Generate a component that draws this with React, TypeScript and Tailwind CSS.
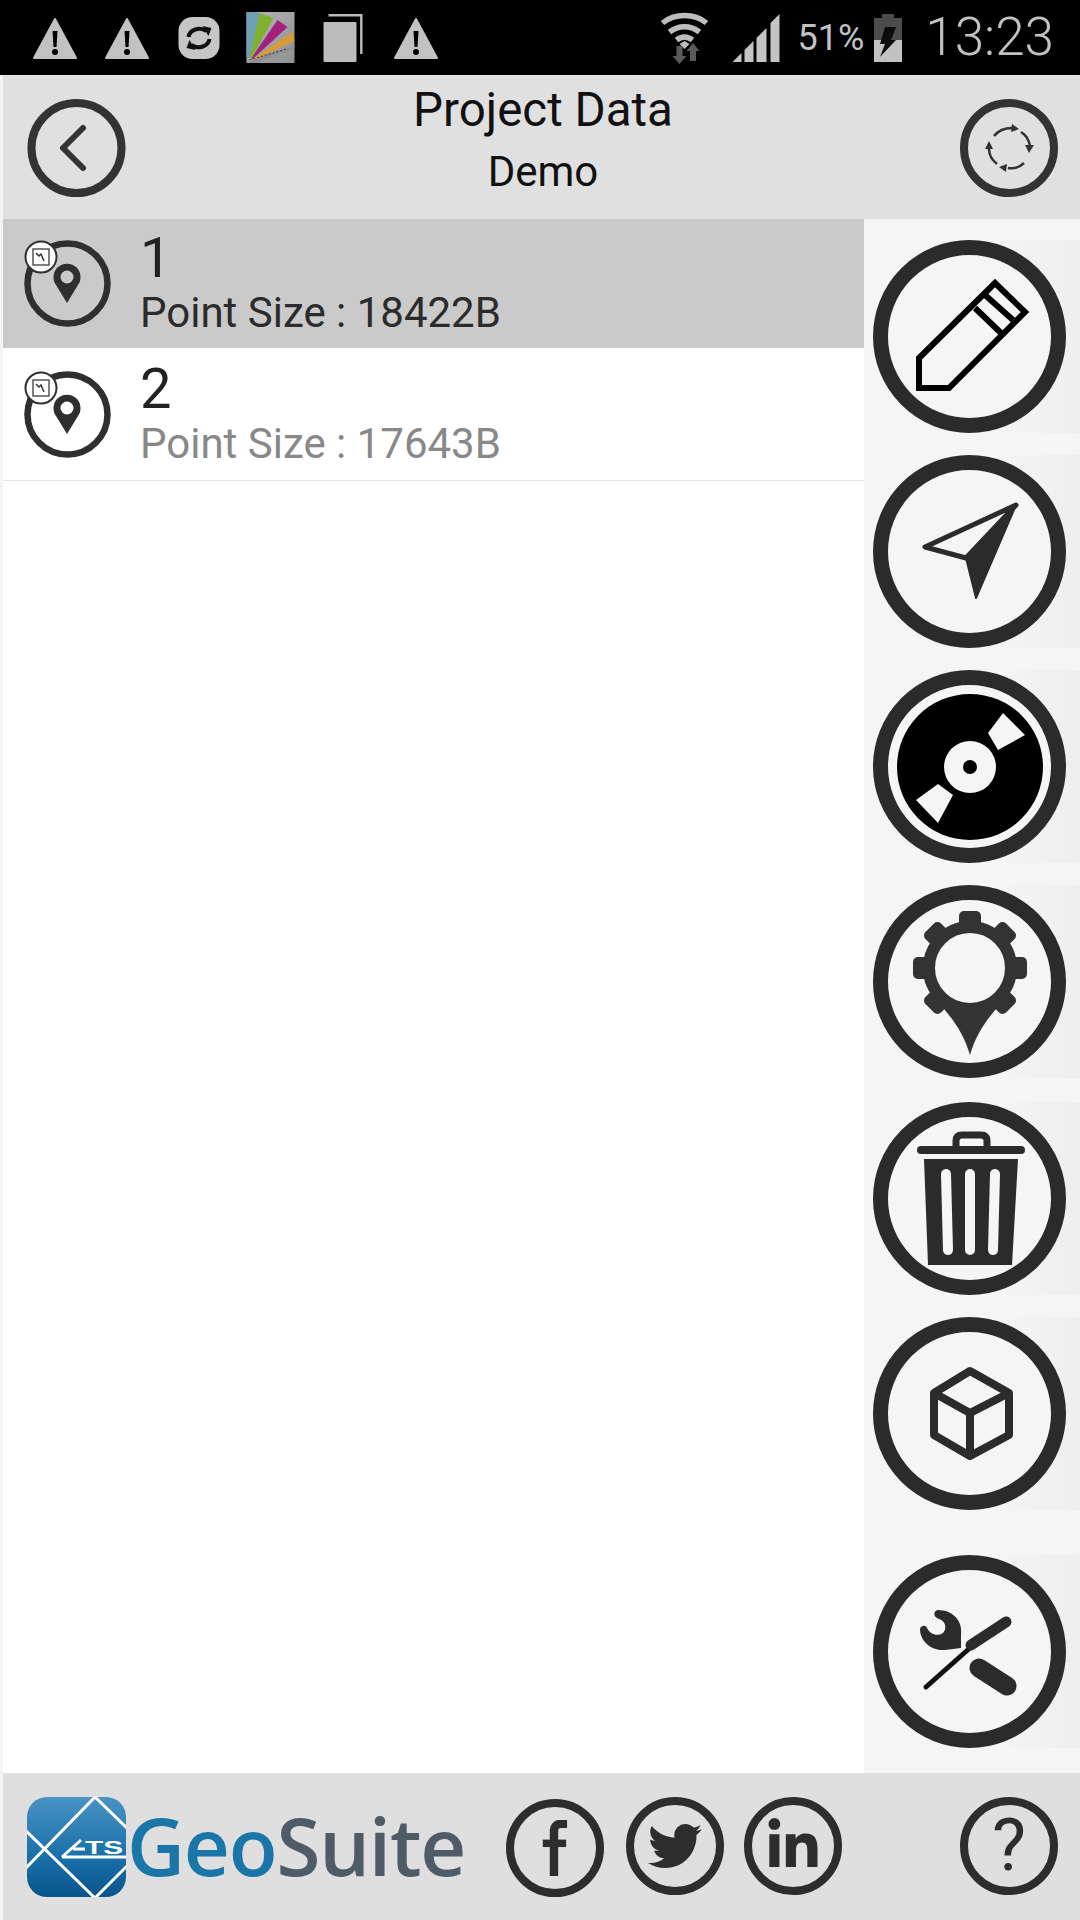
import { FaLinkedinIn, FaTwitter } from 'react-icons/fa';

function Warning({ className = '' }: { className?: string }) {
  return (
    <svg width="46" height="43" viewBox="0 0 45 43" className={`shrink-0 ${className}`}>
      <polygon points="22.5,2 43.5,41 1.5,41" fill="#c2c2c2" stroke="#c2c2c2" strokeWidth="2" strokeLinejoin="round" />
      <polygon points="20,14 25,14 24,30 21,30" fill="#000" />
      <circle cx="22.5" cy="35" r="3" fill="#000" />
    </svg>
  );
}

function SyncBadge() {
  return (
    <svg width="42" height="42" viewBox="0 0 41 42" className="ml-[28px] shrink-0">
      <rect width="41" height="42" rx="14" fill="#c6c6c6" />
      <path d="M10 20C11 13 21 9 28 14" fill="none" stroke="#111" strokeWidth="4" />
      <polygon points="24,9 33,11 30,19" fill="#111" />
      <path d="M31 22C30 29 20 33 13 28" fill="none" stroke="#111" strokeWidth="4" />
      <polygon points="17,33 8,31 11,23" fill="#111" />
    </svg>
  );
}

function AppThumb() {
  return (
    <svg width="49" height="51" viewBox="0 0 48 51" className="ml-[26px] shrink-0">
      <defs>
        <linearGradient id="thumb" x1="0" y1="0" x2="1" y2="1">
          <stop offset="0" stopColor="#b4b6b8" />
          <stop offset="1" stopColor="#8f9092" />
        </linearGradient>
      </defs>
      <rect width="48" height="51" fill="url(#thumb)" />
      <polygon points="0,0 11,0 13,2 3,46 0,46" fill="#6f9fb5" />
      <polygon points="13,1 27,6 5,46 3,46" fill="#7fb02f" />
      <polygon points="31,8 41,15 6,47 5,46" fill="#a51f7c" />
      <polygon points="46,20 48,29 7,48 6,47" fill="#d99a3a" />
      <polygon points="7,48 48,33 48,36 10,51 2,51" fill="#8d8f93" />
      <path d="M3 48L40 37" stroke="#333" strokeWidth="1" strokeDasharray="2 2" />
    </svg>
  );
}

function CopyIcon() {
  return (
    <svg width="40" height="48" viewBox="0 0 39 48" className="ml-[28px] shrink-0">
      <rect y="8" width="33" height="40" rx="1" fill="#bcbcbc" />
      <path d="M5 1.2H37.8V40" fill="none" stroke="#bcbcbc" strokeWidth="2.4" />
    </svg>
  );
}

function Wifi() {
  return (
    <svg width="52" height="52" viewBox="0 0 49 52" className="shrink-0">
      <g fill="none" stroke="#bdbdbd" strokeWidth="5.5">
        <path d="M2 11C14 1 34 1 46 11" />
        <path d="M9 20C18 13 30 13 39 20" />
        <path d="M16 28C21 24 27 24 32 28" />
      </g>
      <polygon points="24,37 19,32 24,29 29,32" fill="#bdbdbd" />
      <polygon points="16,34 22,34 22,44 26,44 19,52 12,44 16,44" fill="#5a5a5a" />
      <polygon points="32.5,31 39,39 35.5,39 35.5,49 29.5,49 29.5,39 26,39" fill="#5a5a5a" />
    </svg>
  );
}

function Signal() {
  return (
    <svg width="48" height="48" viewBox="0 0 47 48" className="ml-[21px] shrink-0">
      <g fill="#c4c4c4">
        <polygon points="0,48 9,39 9,48" />
        <polygon points="12,36 21,27 21,48 12,48" />
        <polygon points="24,24 34,14 34,48 24,48" />
        <polygon points="38,9 47,0 47,48 38,48" />
      </g>
    </svg>
  );
}

function Battery() {
  return (
    <svg width="30" height="48" viewBox="0 0 28 48" className="ml-[9px] shrink-0">
      <rect x="8" width="12" height="5" fill="#4c4c4c" />
      <rect y="4" width="28" height="22" fill="#4c4c4c" />
      <rect y="26" width="28" height="22" fill="#c2c2c2" />
      <polygon points="11,13 22,13 17,26 22,26 6,43 11,30 6,30" fill="#0c0c0c" />
    </svg>
  );
}

function BackButton() {
  return (
    <svg width="99" height="98" viewBox="0 0 99 98" className="shrink-0 mt-[2px]">
      <circle cx="49.5" cy="49" r="45" fill="none" stroke="#333" strokeWidth="8" />
      <path d="M56 29L36 49L56 69" fill="none" stroke="#333" strokeWidth="6" strokeLinecap="round" strokeLinejoin="round" />
    </svg>
  );
}

function ReloadButton() {
  return (
    <svg width="98" height="98" viewBox="0 0 98 98" className="shrink-0 mt-[2px]">
      <circle cx="49" cy="49" r="45" fill="none" stroke="#333" strokeWidth="8" />
      <g fill="none" stroke="#333" strokeWidth="2.5">
        <path d="M34 37C38 32 45 29 52 29" />
        <path d="M61 33C66 36 69 41 70 47" />
        <path d="M64 64C60 68 54 70 48 69" />
        <path d="M37 65C32 61 29 56 29 50" />
      </g>
      <g fill="#333">
        <polygon points="52,25 59,30 51,33" />
        <polygon points="74,46 69,54 65,46" />
        <polygon points="46,73 39,68 47,65" />
        <polygon points="25,50 29,42 33,50" />
      </g>
    </svg>
  );
}

function Ring({ children }: { children: React.ReactNode }) {
  return (
    <svg width="193" height="193" viewBox="0 0 193 193" className="block">
      <circle cx="96.5" cy="96.5" r="89" fill="#f5f5f5" stroke="#2b2b2b" strokeWidth="15" />
      {children}
    </svg>
  );
}

function SideButton({ children, className = '' }: { children: React.ReactNode; className?: string }) {
  return (
    <div className={`h-[193px] pl-[9px] bg-gradient-to-r from-[#f5f5f5] from-[60%] to-[#eeeeee] ${className}`}>
      {children}
    </div>
  );
}

function PointIcon({ hole }: { hole: string }) {
  return (
    <svg width="87" height="87" viewBox="0 0 87 87" className="shrink-0">
      <circle cx="43.5" cy="43.5" r="40" fill="none" stroke="#2f2f2f" strokeWidth="6.5" />
      <path d="M43 63L32 45A13.5 13.5 0 1 1 54 45Z" fill="#2f2f2f" />
      <circle cx="43" cy="37" r="6.5" fill={hole} />
      <circle cx="17" cy="17" r="15.5" fill="#fff" stroke="#2f2f2f" strokeWidth="2" />
      <rect x="9" y="9" width="16" height="16" fill="none" stroke="#555" strokeWidth="1.5" />
      <path d="M12 13L15 16L17 14L20 21" fill="none" stroke="#333" strokeWidth="1.5" />
    </svg>
  );
}

function ProjectRow({ num, size, selected }: { num: string; size: string; selected?: boolean }) {
  return (
    <div className={`flex items-center pl-[21px] ${selected ? 'h-[129px] bg-[#cacaca]' : 'h-[132px] mt-[1px] border-b border-[#e4e4e4]'}`}>
      <PointIcon hole={selected ? '#cacaca' : '#ffffff'} />
      <div className="ml-[29px] flex flex-col">
        <span className="text-[56px] leading-[58px] text-[#222]">{num}</span>
        <span className={`text-[42px] leading-[52px] ${selected ? 'text-[#2b2b2b]' : 'text-[#888888]'}`}>Point Size : {size}</span>
      </div>
    </div>
  );
}

function SocialRing({ className = '', children }: { className?: string; children: React.ReactNode }) {
  return (
    <div className={`w-[98px] h-[98px] rounded-full border-[8px] border-[#2d2d2d] flex items-center justify-center text-[#2d2d2d] shrink-0 ${className}`}>
      {children}
    </div>
  );
}

function Logo() {
  return (
    <svg width="99" height="100" viewBox="0 0 99 100" className="shrink-0">
      <defs>
        <linearGradient id="logoBlue" x1="0" y1="0" x2="0" y2="1">
          <stop offset="0" stopColor="#4a92c4" />
          <stop offset="0.55" stopColor="#1c73ab" />
          <stop offset="1" stopColor="#08558c" />
        </linearGradient>
        <clipPath id="logoClip">
          <rect width="99" height="100" rx="20" />
        </clipPath>
      </defs>
      <g clipPath="url(#logoClip)">
        <rect width="99" height="100" fill="url(#logoBlue)" />
        <g stroke="#fff" strokeWidth="3" fill="none">
          <path d="M-2 72L68 0L101 32" />
          <path d="M-2 33L68 101L101 68" />
        </g>
        <path d="M35 60L54 43M35 60H99M46 52H58" stroke="#fff" strokeWidth="3" fill="none" />
        <text x="58" y="57" fontFamily="'Liberation Sans', sans-serif" fontWeight="700" fontSize="18" fill="#fff" textLength="38" lengthAdjust="spacingAndGlyphs">TS</text>
      </g>
    </svg>
  );
}

export default function App() {
  return (
    <div className="w-[1080px] h-[1920px] flex flex-col bg-white font-['Roboto',sans-serif] overflow-hidden">
      {/* status bar */}
      <div className="h-[75px] bg-black flex items-center pl-[32px] pr-[26px] shrink-0">
        <Warning className="mt-[2px]" />
        <Warning className="mt-[2px] ml-[26px]" />
        <SyncBadge />
        <AppThumb />
        <CopyIcon />
        <Warning className="mt-[2px] ml-[30px]" />
        <div className="ml-auto flex items-center">
          <Wifi />
          <Signal />
          <span className="ml-[17px] text-[36px] text-[#c2c2c2] leading-none">51%</span>
          <Battery />
          <span className="ml-[22px] text-[53px] font-light text-[#c2c2c2] leading-none">13:23</span>
        </div>
      </div>

      <div className="flex-1 flex flex-col border-l-[3px] border-[#f4f4f4] min-h-0">
        {/* header */}
        <div className="h-[144px] bg-[#e0e0e0] flex items-center justify-between pl-[24px] pr-[22px] shrink-0">
          <BackButton />
          <div className="flex flex-col items-center mb-[16px]">
            <span className="text-[47.5px] leading-[66px] text-[#111]">Project Data</span>
            <span className="text-[42px] leading-[58px] text-[#111]">Demo</span>
          </div>
          <ReloadButton />
        </div>

        <div className="flex-1 flex min-h-0">
          {/* list */}
          <div className="flex-1">
            <ProjectRow num="1" size="18422B" selected />
            <ProjectRow num="2" size="17643B" />
          </div>

          {/* side buttons */}
          <div className="w-[216px] bg-[#f5f5f5] pt-[21px] flex flex-col gap-[22px] shrink-0">
            <SideButton>
              <Ring>
                <g fill="none" stroke="#000" strokeWidth="6">
                  <polygon points="46,148 46,118 122,43 152,72 76,148" />
                  <path d="M102 68L128 93M112 55L140 80" />
                </g>
              </Ring>
            </SideButton>
            <SideButton>
              <Ring>
                <polygon points="143,50 52,92 93,103" fill="#f5f5f5" stroke="#2b2b2b" strokeWidth="5" strokeLinejoin="round" />
                <polygon points="143,50 93,103 103,143" fill="#2b2b2b" stroke="#2b2b2b" strokeWidth="2" strokeLinejoin="round" />
              </Ring>
            </SideButton>
            <SideButton>
              <Ring>
                <circle cx="97" cy="97" r="73" fill="#000" />
                <circle cx="97" cy="97" r="26" fill="#f5f5f5" />
                <circle cx="97" cy="97" r="7" fill="#000" />
                <polygon points="130,43 152,65 125,80 115,63" fill="#f5f5f5" />
                <polygon points="43,130 65,153 80,125 65,114" fill="#f5f5f5" />
              </Ring>
            </SideButton>
            <SideButton>
              <Ring>
                <g fill="#333">
                  <path d="M66 118C76 130 90 145 97 170C104 145 118 130 128 118Z" />
                  <rect x="86" y="26" width="22" height="22" rx="5" />
                  <rect x="86" y="26" width="22" height="22" rx="5" transform="rotate(45 97 83)" />
                  <rect x="86" y="26" width="22" height="22" rx="5" transform="rotate(90 97 83)" />
                  <rect x="86" y="26" width="22" height="22" rx="5" transform="rotate(135 97 83)" />
                  <rect x="86" y="26" width="22" height="22" rx="5" transform="rotate(225 97 83)" />
                  <rect x="86" y="26" width="22" height="22" rx="5" transform="rotate(270 97 83)" />
                  <rect x="86" y="26" width="22" height="22" rx="5" transform="rotate(315 97 83)" />
                </g>
                <circle cx="97" cy="83" r="41" fill="#f5f5f5" stroke="#333" strokeWidth="12" />
              </Ring>
            </SideButton>
            <SideButton className="mt-[2px]">
              <Ring>
                <path d="M48 48H148" stroke="#2b2b2b" strokeWidth="8" strokeLinecap="round" />
                <path d="M83 45V39Q83 33 89 33H108Q114 33 114 39V45" fill="none" stroke="#2b2b2b" strokeWidth="7" />
                <polygon points="51,57 145,57 139,163 55,163" fill="#2b2b2b" />
                <g stroke="#f5f5f5" strokeWidth="10" strokeLinecap="round">
                  <path d="M73 72L75 148M97 72V148M122 72L120 148" />
                </g>
              </Ring>
            </SideButton>
            <SideButton>
              <Ring>
                <g fill="none" stroke="#2b2b2b" strokeWidth="8" strokeLinejoin="round">
                  <polygon points="97,54 136,76 136,118 97,139 61,118 61,76" />
                  <path d="M61 76L97 96L136 76M97 96V139" />
                </g>
              </Ring>
            </SideButton>
            <SideButton className="mt-[23px]">
              <Ring>
                <path d="M65 55C80 55 90 66 88 80L88 93L72 95C58 96 47 86 47 74C48 70 53 70 54 73C57 79 64 82 70 78C74 74 73 66 66 64C60 62 60 56 65 55Z" fill="#2b2b2b" />
                <path d="M53 132L98 92" stroke="#111" strokeWidth="5" strokeLinecap="round" />
                <path d="M98 90L133 67" stroke="#2b2b2b" strokeWidth="11" strokeLinecap="round" />
                <path d="M106 113L134 131" stroke="#2b2b2b" strokeWidth="19" strokeLinecap="round" />
              </Ring>
            </SideButton>
          </div>
        </div>

        {/* footer */}
        <div className="h-[147px] bg-[#dfdfdf] flex items-center pl-[24px] pr-[22px] shrink-0">
          <Logo />
          <span className="ml-[1px] mb-[4px] font-['Open_Sans',sans-serif] font-semibold text-[80px] leading-none tracking-[-1.2px]">
            <span className="text-[#1a75a8]">Geo</span>
            <span className="text-[#4f5b66]">Suite</span>
          </span>
          <div className="ml-auto flex items-center gap-[20px]">
            <SocialRing className="mt-[2px] mr-[2px]">
              <svg width="28" height="56" viewBox="0 0 30 60" className="-ml-[2px]">
                <path d="M15 60V12Q15 4 23 4H29" fill="none" stroke="currentColor" strokeWidth="9" />
                <path d="M3 25H28" stroke="currentColor" strokeWidth="8" />
              </svg>
            </SocialRing>
            <SocialRing className="-mt-[1px]"><FaTwitter size={54} /></SocialRing>
            <SocialRing className="-mt-[2px]"><FaLinkedinIn size={56} /></SocialRing>
            <SocialRing className="ml-[98px] -mt-[2px]"><span className="text-[72px] leading-none">?</span></SocialRing>
          </div>
        </div>
      </div>
    </div>
  );
}
